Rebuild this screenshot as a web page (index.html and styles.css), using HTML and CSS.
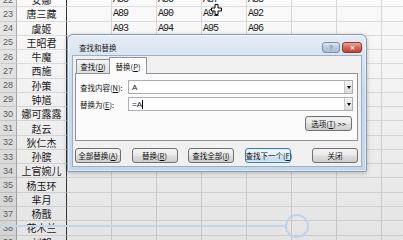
FILE: index.html
```html
<!DOCTYPE html>
<html lang="zh-CN">
<head>
    <meta charset="UTF-8">
    <title>查找和替换</title>
    <link rel="stylesheet" href="styles.css">
</head>
<body>
    <!-- Worksheet behind the dialog -->
    <div class="sheet" id="sheet"></div>

    <!-- Find & Replace dialog -->
    <div class="dialog">
        <div class="titlebar">
            <span class="title">查找和替换</span>
            <div class="caption-buttons">
                <span class="cap-btn help">?</span>
                <span class="cap-btn close">✕</span>
            </div>
        </div>
        <div class="client">
            <div class="tabs">
                <span class="tab">查找(<u>D</u>)</span>
                <span class="tab active">替换(<u>P</u>)</span>
            </div>
            <div class="panel">
                <div class="field">
                    <span class="label">查找内容(<u>N</u>):</span>
                    <div class="combo"><span class="value">A</span><span class="drop"></span></div>
                </div>
                <div class="field">
                    <span class="label">替换为(<u>E</u>):</span>
                    <div class="combo"><span class="value">=A<i class="caret"></i></span><span class="drop"></span></div>
                </div>
                <div class="options-row">
                    <button class="btn options">选项(<u>T</u>) &gt;&gt;</button>
                </div>
            </div>
            <div class="actions">
                <button class="btn">全部替换(<u>A</u>)</button>
                <button class="btn">替换(<u>R</u>)</button>
                <button class="btn">查找全部(<u>I</u>)</button>
                <button class="btn focused">查找下一个(<u>F</u>)</button>
                <button class="btn close-btn">关闭</button>
            </div>
        </div>
    </div>

    <!-- pointer trail from the recording -->
    <div class="trail-line"></div>
    <div class="trail-ring"></div>

    <svg class="cursor" width="11" height="11" viewBox="0 0 11 11">
        <path d="M4 0.5h3v3.5h3.5v3h-3.5v3.5h-3v-3.5h-3.5v-3h3.5z" fill="#fff" stroke="#000" stroke-width="1"/>
    </svg>

    <script>
        const names = ['安娜', '唐三藏', '虞姬', '王昭君', '牛魔', '西施', '孙策', '钟馗', '娜可露露',
            '赵云', '狄仁杰', '孙膑', '上官婉儿', '杨玉环', '芈月', '杨戬', '花木兰', '刘邦'];
        const sheet = document.getElementById('sheet');

        names.forEach((name, i) => {
            const head = document.createElement('div');
            head.className = 'cell rowhead';
            head.textContent = 22 + i;
            sheet.appendChild(head);

            const nameCell = document.createElement('div');
            nameCell.className = 'cell name';
            nameCell.textContent = name;
            sheet.appendChild(nameCell);

            for (let c = 0; c < 8; c++) {
                const cell = document.createElement('div');
                cell.className = 'cell data';
                if (i < 3 && c >= 1 && c <= 4) {
                    cell.textContent = 'A' + (85 + i * 4 + (c - 1));
                }
                sheet.appendChild(cell);
            }
        });
    </script>
</body>
</html>
```

FILE: styles.css
```css
body {
    margin: 0;
    width: 403px;
    height: 240px;
    overflow: hidden;
    position: relative;
    background: linear-gradient(#fafafa, #e4e4e4);
    font-family: "Noto Sans CJK SC", sans-serif;
    color: #111;
}

/* worksheet */
.sheet {
    display: grid;
    grid-template-columns: 17px 50px repeat(8, 45px);
    grid-auto-rows: 14.27px;
    margin-top: -7px;
}
.cell {
    box-sizing: border-box;
    border-right: 1px solid rgba(0, 0, 0, 0.13);
    border-bottom: 1px solid rgba(0, 0, 0, 0.11);
    display: flex;
    align-items: center;
    overflow: hidden;
    white-space: nowrap;
}
.rowhead {
    justify-content: center;
    background: rgba(0, 0, 0, 0.07);
    border-right-color: rgba(0, 0, 0, 0.25);
    color: #5c5c5c;
    font-family: "Liberation Sans", sans-serif;
    font-size: 9px;
}
.name {
    justify-content: center;
    border-right: 1px solid #333;
    font-size: 10px;
    color: #1a1a1a;
}
.data {
    padding-left: 1px;
    font-family: "Liberation Mono", monospace;
    font-size: 10px;
    letter-spacing: -1px;
    color: #222;
}

/* dialog window */
.dialog {
    position: absolute;
    left: 67px;
    top: 34px;
    width: 300px;
    height: 138px;
    box-sizing: border-box;
    border: 1px solid #8a9bb0;
    border-radius: 6px 6px 2px 2px;
    background: linear-gradient(#e4ecf5, #c8daee 40%, #c3d7ec);
    box-shadow: 0 1px 4px rgba(0, 0, 0, 0.25), inset 0 0 0 1px rgba(255, 255, 255, 0.5);
    padding: 0 4px 4px 4px;
    display: flex;
    flex-direction: column;
    font-size: 7.5px;
}
.titlebar {
    height: 16px;
    padding: 4px 0 0 7px;
    display: flex;
    align-items: center;
    justify-content: space-between;
}
.title {
    color: #1b1b1b;
}
.caption-buttons {
    display: flex;
    gap: 2px;
}
.cap-btn {
    height: 11px;
    box-sizing: border-box;
    border-radius: 3px;
    display: flex;
    align-items: center;
    justify-content: center;
    font-family: "Liberation Sans", sans-serif;
    font-size: 7px;
    font-weight: bold;
}
.help {
    width: 18px;
    border: 1px solid #7d8ea5;
    background: linear-gradient(#dfe8f2, #b8cadf 50%, #aabfd8);
    color: #7f8ea3;
}
.close {
    width: 20px;
    border: 1px solid #8a3a30;
    background: linear-gradient(#eba796, #d06a57 50%, #c4402f);
    color: #fff;
    font-size: 6px;
}

.client {
    flex: 1;
    box-sizing: border-box;
    background: #f0f0f0;
    border: 1px solid #9bafc6;
    padding: 1px 3px 0 2px;
    display: flex;
    flex-direction: column;
}

/* tabs */
.tabs {
    height: 16px;
    padding-left: 1px;
    display: flex;
    align-items: flex-end;
}
.tab {
    height: 14px;
    width: 34px;
    box-sizing: border-box;
    border: 1px solid #8e9199;
    border-bottom: none;
    background: linear-gradient(#f5f5f5, #e0e0e0);
    display: flex;
    align-items: center;
    justify-content: center;
    color: #111;
}
.tab.active {
    position: relative;
    z-index: 1;
    height: 17px;
    width: 38px;
    margin-left: -1px;
    margin-bottom: -1px;
    background: #fbfbfb;
    border-radius: 1px 1px 0 0;
}

.panel {
    height: 68px;
    box-sizing: border-box;
    border: 1px solid #8e9199;
    background: #fbfbfb;
    padding: 6px 4px 0 4px;
}
.field {
    height: 14px;
    margin-bottom: 3px;
    display: flex;
    align-items: center;
}
.label {
    width: 48px;
}
.combo {
    flex: 1;
    height: 14px;
    box-sizing: border-box;
    border: 1px solid #abadb3;
    background: #fff;
    display: flex;
    align-items: center;
}
.value {
    padding-left: 3px;
    font-family: "Liberation Sans", sans-serif;
    font-size: 8px;
    display: flex;
    align-items: center;
}
.caret {
    width: 1px;
    height: 9px;
    background: #000;
    margin-left: 0;
}
.drop {
    margin-left: auto;
    width: 8px;
    height: 12px;
    box-sizing: border-box;
    border-left: 1px solid #c9c9c9;
    background: linear-gradient(#f3f3f3, #dcdcdc);
    display: flex;
    align-items: center;
    justify-content: center;
}
.drop::after {
    content: "";
    border-left: 2.5px solid transparent;
    border-right: 2.5px solid transparent;
    border-top: 3px solid #111;
}
.options-row {
    margin-top: 5px;
    padding-right: 1px;
    display: flex;
    justify-content: flex-end;
}

/* buttons */
.btn {
    width: 46px;
    height: 15px;
    box-sizing: border-box;
    padding: 0;
    border: 1px solid #707070;
    border-radius: 3px;
    background: linear-gradient(#f2f2f2, #ebebeb 48%, #dddddd 52%, #cfcfcf);
    font-family: "Noto Sans CJK SC", sans-serif;
    font-size: 7.5px;
    color: #111;
    white-space: nowrap;
}
.options {
    width: 47px;
}
.btn.focused {
    border-color: #3c7fb1;
    background: linear-gradient(#f4f9fd, #e1edf6 48%, #d2e4f1 52%, #c4dbee);
    box-shadow: inset 0 0 0 1px #d8ecfa;
}
.actions {
    margin-top: 7px;
    display: flex;
    gap: 10.5px;
}
.close-btn {
    margin-left: auto;
}

/* pointer trail */
.trail-line {
    position: absolute;
    left: 0;
    top: 225px;
    width: 286px;
    height: 2px;
    background: #c2d7ec;
}
.trail-ring {
    position: absolute;
    left: 285px;
    top: 214px;
    width: 20px;
    height: 20px;
    border: 2px solid #bed4ea;
    border-radius: 50%;
}
.cursor {
    position: absolute;
    left: 211px;
    top: 4px;
}
```
